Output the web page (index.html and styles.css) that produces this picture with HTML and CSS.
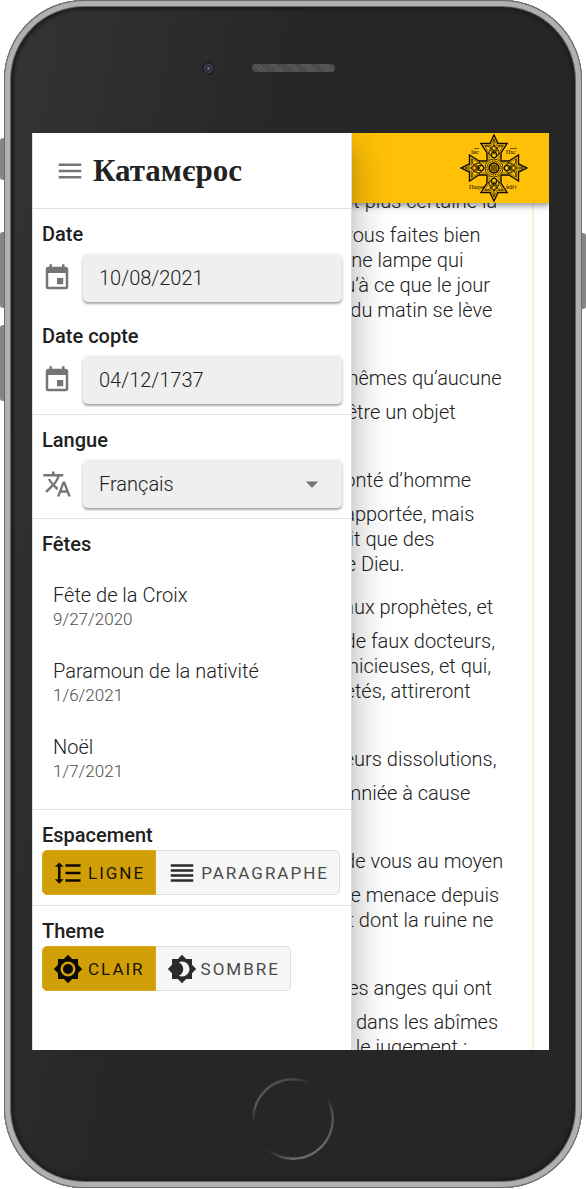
FILE: index.html
```html
<!DOCTYPE html>
<html lang="fr">
<head>
<meta charset="utf-8">
<meta name="viewport" content="width=device-width, initial-scale=1">
<title>Катамєрос</title>
<link rel="stylesheet" href="styles.css">
</head>
<body>
<div class="device">
  <span class="key key-mute"></span>
  <span class="key key-up"></span>
  <span class="key key-down"></span>
  <span class="key key-power"></span>

  <div class="bezel-top">
    <span class="camera"></span>
    <span class="speaker"></span>
  </div>

  <div class="screen">
    <main class="reader">
      <article class="passage">
        <p><span class="verse">19</span>Et nous tenons pour d’autant plus certaine la parole prophétique, à laquelle vous faites bien de prêter attention, comme à une lampe qui brille dans un lieu obscur, jusqu’à ce que le jour vienne à paraître et que l’étoile du matin se lève dans vos cœurs ;</p>
        <p><span class="verse">20</span>sachant tout d’abord vous-mêmes qu’aucune prophétie de l’Écriture ne peut être un objet d’interprétation particulière,</p>
        <p><span class="verse">21</span>car ce n’est pas par une volonté d’homme qu’une prophétie a jamais été apportée, mais c’est poussés par le Saint-Esprit que des hommes ont parlé de la part de Dieu.</p>
        <p><span class="verse">1</span>Il y a eu parmi le peuple de faux prophètes, et il y aura de même parmi vous de faux docteurs, qui introduiront des sectes pernicieuses, et qui, reniant le maître qui les a rachetés, attireront sur&nbsp;eux une ruine soudaine.</p>
        <p><span class="verse">2</span>Plusieurs les suivront dans leurs dissolutions, et la voie de la vérité sera calomniée à cause d’eux.</p>
        <p><span class="verse">3</span>Par cupidité, ils trafiqueront de vous au moyen de paroles trompeuses, eux que menace depuis longtemps la condamnation, et dont la ruine ne sommeille point.</p>
        <p><span class="verse">4</span>Car, si Dieu n’a pas épargné les anges qui ont péché, mais s’il les a précipités dans les abîmes de ténèbres et les réserve pour le jugement :</p>
      </article>
    </main>

    <header class="toolbar">
      <svg class="cross" viewBox="-34 -34 68 68" role="img" aria-label="Croix copte">
        <defs>
          <g id="arm">
            <path d="M-7-7V-15L-13-24.500H-4L0-33L4-24.500H13L7-15V-7" stroke-width="1.400"/>
            <path d="M-5-8V-15L-9.500-22.500H-3L0-29L3-22.500H9.500L5-15V-8" stroke-width=".5"/>
            <path d="M0-29V-22M-9-22Q-3-22 0-17Q3-22 9-22M-5-14Q-5-20 0-23Q5-20 5-14M-6-15L0-10L6-15M-4-18L4-12M4-18L-4-12" stroke-width=".8"/>
            <circle cy="-19" r="2.500" stroke-width=".7"/>
            <circle cy="-13" r="3" stroke-width="1"/>
          </g>
        </defs>
        <g fill="none" stroke="#0c0a00">
          <use href="#arm"/>
          <use href="#arm" transform="rotate(90)"/>
          <use href="#arm" transform="rotate(180)"/>
          <use href="#arm" transform="rotate(270)"/>
          <circle r="9" stroke-width=".8"/>
          <circle r="7" stroke-width="1" stroke-dasharray="1.500 .7"/>
          <circle r="5" stroke-width="1.400"/>
          <path d="M-5-2H5M-5 0H5M-5 2H5M-2-5V5M0-5V5M2-5V5" stroke-width=".7"/>
          <path d="M-20-19.500H-15M16-19.500H23" stroke-width=".6"/>
        </g>
        <g class="cross-text">
          <text x="-23" y="-14">Іис</text>
          <text x="12" y="-14">Пхс</text>
          <text x="-25" y="21">Пшри</text>
          <text x="12" y="21">ѝФ†</text>
        </g>
      </svg>
    </header>

    <nav class="drawer">
      <div class="drawer-head">
        <button class="menu-button" type="button" aria-label="Menu">
          <svg class="icon" viewBox="0 0 24 24"><path d="M3,6H21V8H3V6M3,11H21V13H3V11M3,16H21V18H3V16Z"/></svg>
        </button>
        <h1 class="brand">Катамєрос</h1>
      </div>

      <section class="section dates">
        <div>
          <label class="heading" for="date">Date</label>
          <div class="row">
            <svg class="icon" viewBox="0 0 24 24"><path d="M19,19H5V8H19M16,1V3H8V1H6V3H5C3.890,3 3,3.890 3,5V19A2,2 0 0,0 5,21H19A2,2 0 0,0 21,19V5C21,3.890 20.100,3 19,3H18V1M17,12H12V17H17V12Z"/></svg>
            <input class="field" id="date" type="text" value="10/08/2021">
          </div>
        </div>
        <div>
          <label class="heading" for="coptic">Date copte</label>
          <div class="row">
            <svg class="icon" viewBox="0 0 24 24"><path d="M19,19H5V8H19M16,1V3H8V1H6V3H5C3.890,3 3,3.890 3,5V19A2,2 0 0,0 5,21H19A2,2 0 0,0 21,19V5C21,3.890 20.100,3 19,3H18V1M17,12H12V17H17V12Z"/></svg>
            <input class="field" id="coptic" type="text" value="04/12/1737">
          </div>
        </div>
      </section>

      <section class="section">
        <label class="heading" for="lang">Langue</label>
        <div class="row">
          <svg class="icon" viewBox="0 0 24 24"><path d="M12.870,15.070L10.330,12.560L10.360,12.530C12.100,10.590 13.340,8.360 14.070,6H17V4H10V2H8V4H1V6H12.170C11.500,7.920 10.440,9.750 9,11.350C8.070,10.320 7.300,9.190 6.690,8H4.690C5.420,9.630 6.420,11.170 7.670,12.560L2.580,17.580L4,19L9,14L12.110,17.110L12.870,15.070M18.500,10H16.500L12,22H14L15.120,19H19.870L21,22H23L18.500,10M15.880,17L17.500,12.670L19.120,17H15.880Z"/></svg>
          <div class="select-wrap">
            <select class="field" id="lang"><option>Français</option></select>
            <svg class="icon caret" viewBox="0 0 24 24"><path d="M7,10L12,15L17,10H7Z"/></svg>
          </div>
        </div>
      </section>

      <section class="section">
        <h2 class="heading">Fêtes</h2>
        <ul class="feasts">
          <li><a href="#croix"><span class="feast-name">Fête de la Croix</span><span class="feast-date">9/27/2020</span></a></li>
          <li><a href="#paramoun"><span class="feast-name">Paramoun de la nativité</span><span class="feast-date">1/6/2021</span></a></li>
          <li><a href="#noel"><span class="feast-name">Noël</span><span class="feast-date">1/7/2021</span></a></li>
        </ul>
      </section>

      <section class="section">
        <h2 class="heading toggle-heading">Espacement</h2>
        <div class="toggle">
          <button class="active" type="button" aria-pressed="true"><svg class="icon" viewBox="0 0 24 24"><path d="M10,13H22V11H10M10,19H22V17H10M10,7H22V5H10M6,7H8.500L5,3.500L1.500,7H4V17H1.500L5,20.500L8.500,17H6V7Z"/></svg>LIGNE</button>
          <button type="button" aria-pressed="false"><svg class="icon" viewBox="0 0 24 24"><path d="M3,15H21V13H3V15M3,19H21V17H3V19M3,11H21V9H3V11M3,5V7H21V5H3Z"/></svg>PARAGRAPHE</button>
        </div>
      </section>

      <section class="section">
        <h2 class="heading toggle-heading">Theme</h2>
        <div class="toggle">
          <button class="active" type="button" aria-pressed="true"><svg class="icon" viewBox="0 0 24 24"><path d="M12,8A4,4 0 0,0 8,12A4,4 0 0,0 12,16A4,4 0 0,0 16,12A4,4 0 0,0 12,8M12,18A6,6 0 0,1 6,12A6,6 0 0,1 12,6A6,6 0 0,1 18,12A6,6 0 0,1 12,18M20,8.690V4H15.310L12,0.690L8.690,4H4V8.690L0.690,12L4,15.310V20H8.690L12,23.310L15.310,20H20V15.310L23.310,12L20,8.690Z"/></svg>CLAIR</button>
          <button type="button" aria-pressed="false"><svg class="icon" viewBox="0 0 24 24"><path d="M12,18C11.110,18 10.260,17.800 9.500,17.450C11.560,16.500 13,14.420 13,12C13,9.580 11.560,7.500 9.500,6.550C10.260,6.200 11.110,6 12,6A6,6 0 0,1 18,12A6,6 0 0,1 12,18M20,8.690V4H15.310L12,0.690L8.690,4H4V8.690L0.690,12L4,15.310V20H8.690L12,23.310L15.310,20H20V15.310L23.310,12L20,8.690Z"/></svg>SOMBRE</button>
        </div>
      </section>
    </nav>
  </div>

  <div class="bezel-bottom"><span class="home"></span></div>
</div>
</body>
</html>
```
FILE: styles.css
```css
* { box-sizing: border-box; }

body {
  margin: 0;
  padding: 0 4px 1px;
  height: 100vh;
  background: #fff;
  font-family: Roboto, "Noto Sans", sans-serif;
  font-size: 20px;
  color: #212121;
}

h1, h2, p, ul { margin: 0; padding: 0; }
ul { list-style: none; }

/* Phone body */
.device {
  position: relative;
  display: flex;
  flex-direction: column;
  height: 100%;
  border-radius: 80px;
  background: linear-gradient(100deg, #343434 0%, #262626 40%);
  box-shadow: inset 0 0 0 1px #6a6a6a, inset 0 0 0 6px #b0b0b0,
    inset 0 0 0 7px #666, inset 0 0 3px 10px #1e1e1e;
}

.key {
  position: absolute;
  z-index: -1;
  left: -4px;
  width: 8px;
  height: 76px;
  border-radius: 3px;
  background: #858585;
}
.key-mute { top: 138px; height: 42px; }
.key-up { top: 232px; }
.key-down { top: 325px; }
.key-power { top: 233px; right: -4px; left: auto; }

.bezel-top {
  display: grid;
  grid-template-columns: 1fr auto 1fr;
  align-items: center;
  column-gap: 37px;
  flex: 0 0 133px;
  padding-top: 3px;
}
.camera {
  justify-self: end;
  width: 13px;
  height: 13px;
  border-radius: 50%;
  background: radial-gradient(circle, #62626c 0 1px, #2c2c36 2px 3px, #44444e 4px, #20202a 5px);
}
.speaker {
  grid-column: 2;
  width: 83px;
  height: 8px;
  border-radius: 4px;
  background: repeating-linear-gradient(45deg, #444 0 1px, #5c5c5c 1px 2px);
}

.bezel-bottom {
  display: flex;
  flex: 0 0 138px;
  align-items: center;
  justify-content: center;
}
.home {
  width: 82px;
  height: 82px;
  border-radius: 50%;
  background:
    radial-gradient(circle, #262626 38px, transparent 39px),
    conic-gradient(#4a4a4a, #262626 25deg 60deg, #505050 80deg, #6a6a6a 140deg 180deg, #262626 220deg 265deg, #5a5a5a 290deg, #4a4a4a);
}

.screen {
  position: relative;
  flex: 1;
  min-height: 0;
  margin: 0 33px 0 28px;
  overflow: hidden;
  background: #fff;
}

/* Reading page */
.reader {
  height: 100%;
  padding: 0 15px;
  overflow-y: auto;
  scrollbar-width: none;
}
.passage {
  padding: 38px 28px 20px 34px;
  border: 2px solid #fff0cc;
  border-width: 0 2px;
  font-weight: 300;
  line-height: 25px;
}
.verse {
  display: inline-block;
  padding: 20px 10px 7px 0;
  font-size: 14px;
}

.toolbar {
  position: absolute;
  inset: 0 0 auto;
  display: flex;
  justify-content: flex-end;
  height: 70px;
  padding: 1px 21px;
  background: #ffc107;
  box-shadow: 0 2px 5px rgba(0, 0, 0, .3), 0 5px 6px rgba(0, 0, 0, .14);
}
.cross { width: 68px; height: 68px; }
.cross-text { font: 6px "Liberation Serif", serif; fill: #0c0a00; }

/* Navigation drawer */
.drawer {
  position: absolute;
  inset: 0 auto 0 0;
  width: 320px;
  border: 1px solid #dcdcdc;
  border-width: 0 1px;
  background: #fff;
  box-shadow: 0 10px 12px -6px rgba(0, 0, 0, .2), 0 20px 30px 2px rgba(0, 0, 0, .14),
    0 8px 38px 7px rgba(0, 0, 0, .12);
}
.drawer-head {
  display: flex;
  align-items: center;
  gap: 8px;
  height: 76px;
  padding-left: 22px;
  border-bottom: 1px solid #e0e0e0;
}
.menu-button { display: flex; padding: 0; border: 0; background: none; }
.brand { font: bold 31px/40px "Liberation Serif", serif; color: #222; }

.icon { flex: none; width: 30px; height: 30px; fill: #757575; }

.section { padding: 10px 9px; border-bottom: 1px solid #e0e0e0; }
.section:last-child { border-bottom: 0; }
.dates { display: grid; gap: 19px; }

.heading {
  display: block;
  margin-bottom: 5px;
  font-size: 20px;
  font-weight: 500;
  line-height: 30px;
}
.toggle-heading { margin: 0; }

.row { display: flex; align-items: center; gap: 11px; }
.field {
  flex: 1;
  width: 100%;
  min-width: 0;
  height: 48px;
  padding: 0 16px;
  border: 0;
  border-radius: 5px;
  appearance: none;
  background: #efefef;
  color: #212121;
  font: 300 20px Roboto, "Noto Sans", sans-serif;
  box-shadow: 0 2px 2px rgba(0, 0, 0, .28), 0 1px 4px rgba(0, 0, 0, .12);
}
.select-wrap { position: relative; display: flex; flex: 1; }
.caret { position: absolute; top: 9px; right: 15px; pointer-events: none; }

.feasts { padding: 4px 11px 3px; }
.feasts a {
  display: flex;
  flex-direction: column;
  justify-content: center;
  height: 76px;
  color: #212121;
  text-decoration: none;
}
.feast-name { font-weight: 300; line-height: 25px; }
.feast-date { font-size: 17px; font-weight: 300; line-height: 22px; color: #4c4c4c; }

.toggle { display: flex; }
.toggle button {
  display: flex;
  align-items: center;
  gap: 4px;
  height: 45px;
  padding: 0 10px;
  border: 1px solid #dfdfdf;
  border-left-color: #f6f6f6;
  border-radius: 0 5px 5px 0;
  background: #f6f6f6;
  color: #4a4a4a;
  font: 400 17px Roboto, "Noto Sans", sans-serif;
  letter-spacing: 2px;
}
.toggle .icon { fill: #2b2b2b; }
.toggle .active {
  gap: 5px;
  border-color: #dca51c;
  border-radius: 5px 0 0 5px;
  background: #d09e07;
  color: #1a1400;
}
.toggle .active .icon { fill: #0c0900; }
```
